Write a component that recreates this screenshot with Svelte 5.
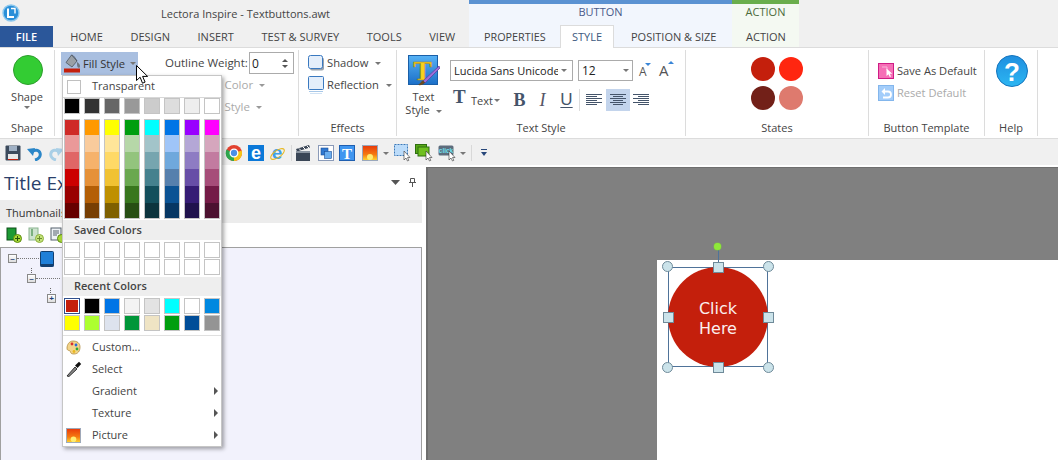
<script>
  const grays = ['#000000','#333333','#666666','#999999','#cccccc','#dddddd','#eeeeee','#ffffff'];
  const columns = [
    ['#cf2a27','#ea9999','#e06666','#cc0000','#990000','#660000'],
    ['#ff9900','#f9cb9c','#f6b26b','#e69138','#b45f06','#783f04'],
    ['#ffff00','#ffe599','#ffd966','#f1c232','#bf9000','#7f6000'],
    ['#009e0f','#b6d7a8','#93c47d','#6aa84f','#38761d','#274e13'],
    ['#00ffff','#a2c4c9','#76a5af','#45818e','#134f5c','#0c343d'],
    ['#0075e6','#9fc5f8','#6fa8dc','#5680ad','#0b5394','#073763'],
    ['#9900ff','#b4a7d6','#8e7cc3','#674ea7','#351c75','#20124d'],
    ['#ff00ff','#d5a6bd','#c27ba0','#a64d79','#741b47','#4c1130']
  ];
  const saved = Array(16).fill('#ffffff');
  const recent = ['#c41f0c','#000000','#0075e6','#f3f3f3','#e3e3e3','#00ffff','#ffffff','#0088e0',
    '#ffff00','#adff2f','#dde3ee','#009639','#efe4c4','#009e0f','#004d98','#949494'];
  const tabs = ['HOME','DESIGN','INSERT','TEST & SURVEY','TOOLS','VIEW'];
  const menuRows = [
    { label: 'Custom...', icon: 'palette' },
    { label: 'Select', icon: 'dropper' },
    { label: 'Gradient', sub: true },
    { label: 'Texture', sub: true },
    { label: 'Picture', sub: true, icon: 'picture' }
  ];
</script>

<div class="app">
  <header class="top">
    <div class="top-left">
      <div class="titlebar">
        <svg class="logo" width="18" height="18" viewBox="0 0 18 18">
          <circle cx="9" cy="9" r="8" fill="#2a8fd8" stroke="#8cc8ee" stroke-width="1.4"/>
          <path d="M6 4.500v8.500h6" fill="none" stroke="#fff" stroke-width="2"/>
          <path d="M9 4.500h4v5" fill="none" stroke="#fff" stroke-width="1.4"/>
        </svg>
        <span class="title">Lectora Inspire - Textbuttons.awt</span>
      </div>
      <nav class="tabs">
        <span class="file">FILE</span>
        <span class="tabs-gap"></span>
        {#each tabs as t}<span class="tab">{t}</span>{/each}
      </nav>
    </div>
    <div class="ctx ctx-blue">
      <div class="ctx-head">BUTTON</div>
      <div class="ctx-tabs">
        <span class="tab t-prop">PROPERTIES</span>
        <span class="tab active">STYLE</span>
        <span class="tab t-pos">POSITION &amp; SIZE</span>
      </div>
    </div>
    <div class="ctx ctx-green">
      <div class="ctx-head">ACTION</div>
      <div class="ctx-tabs"><span class="tab t-action">ACTION</span></div>
    </div>
  </header>

  <section class="ribbon">
    <div class="group g-shape">
      <div class="content shape-btn">
        <span class="green"></span>
        <span class="lbl">Shape</span>
        <i class="caret c-shape"></i>
      </div>
      <div class="glabel">Shape</div>
    </div>

    <div class="group g-style">
      <div class="content">
        <div class="style-top">
          <span class="fill-btn">
            <svg width="18" height="19" viewBox="0 0 18 19">
              <path d="M7.500 1 2 8.500l6 4.500 5-6z" fill="#9aa0a6" stroke="#4d5560" stroke-width=".8"/>
              <path d="M7.500 1c2 .5 3 2 5.500 6" fill="none" stroke="#4d5560"/>
              <path d="M13 8c1.500 1 3 2 3 4s-1 2-2 1.500-1-3-1-5.500z" fill="#6d7680"/>
              <rect x="0" y="14.500" width="16" height="4" fill="#c41f0c"/>
            </svg>
            <span class="fill-text">Fill Style</span>
            <i class="caret"></i>
          </span>
          <span class="ow-label">Outline Weight:</span>
          <span class="spin">
            <span>0</span>
            <span class="spin-arrows"><i class="tri-up"></i><i class="caret dark"></i></span>
          </span>
        </div>
        <div class="outline-row">Outline Color <i class="caret light"></i></div>
        <div class="outline-row">Outline Style <i class="caret light"></i></div>
      </div>
      <div class="glabel">Style</div>
    </div>

    <div class="group g-effects">
      <div class="content">
        <div class="effect">
          <svg width="17" height="16" viewBox="0 0 17 16">
            <rect x="2" y="2.500" width="14" height="13" rx="2" fill="#9aa3ad"/>
            <rect x=".5" y=".5" width="14" height="13" rx="2" fill="#e4eefa" stroke="#3a79c0"/>
          </svg>
          <span>Shadow</span><i class="caret"></i>
        </div>
        <div class="effect">
          <svg width="17" height="18" viewBox="0 0 17 18">
            <rect x=".5" y=".5" width="15" height="13" rx="1" fill="#e4eefa" stroke="#3a79c0"/>
            <path d="M1 15.500h14" stroke="#a8c8e8"/>
            <path d="M2 17.500h12" stroke="#d0e2f4"/>
          </svg>
          <span>Reflection</span><i class="caret"></i>
        </div>
      </div>
      <div class="glabel">Effects</div>
    </div>

    <div class="group g-text">
      <div class="content text-flex">
        <div class="ts-btn">
          <svg width="32" height="32" viewBox="0 0 32 32">
            <defs>
              <linearGradient id="tsg" x1="0" y1="0" x2="0" y2="1">
                <stop offset="0" stop-color="#56b2f5"/><stop offset="1" stop-color="#1b6fc8"/>
              </linearGradient>
            </defs>
            <rect x=".5" y=".5" width="29" height="29" fill="url(#tsg)" stroke="#1a5fa8"/>
            <text x="14.500" y="25" text-anchor="middle" class="ts-t">T</text>
            <path d="M31 11 15 26l2 2L32 13z" fill="#9a6fd8" stroke="#5c3a98" stroke-width=".7"/>
            <path d="M15 25.500c-2 .5-2.500 3-5 4.500 3 .5 6-.5 7-2.500z" fill="#6a4a22"/>
          </svg>
          <span class="lbl ts-l1">Text</span>
          <span class="lbl">Style <i class="caret"></i></span>
        </div>
        <div class="ts-right">
          <div class="ts-row1">
            <span class="combo c-font"><span class="clip">Lucida Sans Unicode</span><i class="caret"></i></span>
            <span class="combo c-size"><span class="clip">12</span><i class="caret"></i></span>
            <span class="growa a1">A<i class="tri-down-blue"></i></span>
            <span class="growa a2">A<i class="tri-up-blue"></i></span>
          </div>
          <div class="ts-row2">
            <span class="bigt">T</span>
            <span class="small-text">Text</span><i class="caret"></i>
            <span class="fmt f-b">B</span>
            <span class="fmt f-i">I</span>
            <span class="fmt f-u">U</span>
            <span class="vsep"></span>
            <span class="align a-l">
              <svg width="16" height="12" viewBox="0 0 16 12"><path d="M0 .5h16M0 2.500h11M0 4.500h16M0 6.500h11M0 8.500h16M0 10.500h11" stroke="#44546a"/></svg>
            </span>
            <span class="align on">
              <svg width="16" height="12" viewBox="0 0 16 12"><path d="M0 .5h16M3 2.500h10M0 4.500h16M3 6.500h10M0 8.500h16M3 10.500h10" stroke="#44546a"/></svg>
            </span>
            <span class="align a-r">
              <svg width="16" height="12" viewBox="0 0 16 12"><path d="M0 .5h16M5 2.500h11M0 4.500h16M5 6.500h11M0 8.500h16M5 10.500h11" stroke="#44546a"/></svg>
            </span>
          </div>
        </div>
      </div>
      <div class="glabel">Text Style</div>
    </div>

    <div class="group g-states">
      <div class="content states">
        <span class="dot" style="background:#c41f0c"></span>
        <span class="dot" style="background:#ff2610"></span>
        <span class="dot" style="background:#722018"></span>
        <span class="dot" style="background:#de7a6e"></span>
      </div>
      <div class="glabel">States</div>
    </div>

    <div class="group g-tpl">
      <div class="content tpl">
        <div class="tpl-row">
          <svg width="16" height="16" viewBox="0 0 16 16">
            <rect x=".5" y=".5" width="15" height="15" fill="#f56fb6" stroke="#cf1c85"/>
            <path d="M4 4h5v3" fill="none" stroke="#f9b6da"/>
            <path d="M8.500 5.500v7.500l2-1.800 1.300 2.800 1.200-.6-1.200-2.700h2.500z" fill="#fff"/>
          </svg>
          <span>Save As Default</span>
        </div>
        <div class="tpl-row off">
          <svg width="16" height="16" viewBox="0 0 16 16">
            <rect x=".5" y=".5" width="15" height="15" fill="#a3cdfa" stroke="#83b6ec"/>
            <path d="M5 6.500h5a2.800 2.800 0 0 1 0 6H5" fill="none" stroke="#fff" stroke-width="1.800"/>
            <path d="M7 3 3.500 6.500 7 10z" fill="#fff"/>
          </svg>
          <span>Reset Default</span>
        </div>
      </div>
      <div class="glabel">Button Template</div>
    </div>

    <div class="group g-help">
      <div class="content help">
        <svg width="32" height="32" viewBox="0 0 32 32">
          <defs>
            <linearGradient id="hg" x1="0" y1="0" x2="0" y2="1">
              <stop offset="0" stop-color="#1f8fe0"/><stop offset="1" stop-color="#2cb6f2"/>
            </linearGradient>
          </defs>
          <circle cx="16" cy="16" r="15.500" fill="url(#hg)" stroke="#1675bd"/>
          <text x="16" y="25.500" text-anchor="middle" class="help-q">?</text>
        </svg>
      </div>
      <div class="glabel">Help</div>
    </div>
  </section>

  <div class="qat">
    <svg class="q save" width="16" height="16" viewBox="0 0 16 16">
      <rect x=".5" y=".5" width="15" height="15" rx="1" fill="#3c4a5c"/>
      <rect x="4" y="1" width="8" height="5" fill="#9fb0c4"/>
      <rect x="3" y="9" width="10" height="6" fill="#e8e8e8"/>
      <rect x="3" y="14" width="10" height="1" fill="#c41f0c"/>
    </svg>
    <svg class="q undo" width="17" height="16" viewBox="0 0 17 16">
      <path d="M9 15c4-1 6-4 5-7-1-3-5-4-8-1" fill="none" stroke="#2a86c8" stroke-width="3"/>
      <path d="M1 4l8-1-2 8z" fill="#2a86c8"/>
    </svg>
    <svg class="q redo" width="17" height="16" viewBox="0 0 17 16">
      <path d="M8 15c-4-1-6-4-5-7 1-3 5-4 8-1" fill="none" stroke="#a9cfe6" stroke-width="3"/>
      <path d="M16 4l-8-1 2 8z" fill="#a9cfe6"/>
    </svg>
    <span class="q-hidden"></span>
    <svg class="q" width="18" height="18" viewBox="0 0 18 18">
      <circle cx="9" cy="9" r="8" fill="#e2412f"/>
      <path d="M9 9 16.600 6.500A8 8 0 0 1 9 17z" fill="#f5c518"/>
      <path d="M9 9 9 17A8 8 0 0 1 1.500 5.500z" fill="#2fa84f"/>
      <circle cx="9" cy="9" r="3.800" fill="#4a8fe8" stroke="#fff" stroke-width="1.300"/>
    </svg>
    <svg class="q vis" width="16" height="16" viewBox="0 0 16 16">
      <rect width="16" height="16" fill="#0b78d8"/>
      <text x="8" y="13.500" text-anchor="middle" class="e-w">e</text>
    </svg>
    <svg class="q vis" width="17" height="17" viewBox="0 0 17 17">
      <text x="8" y="14" text-anchor="middle" class="e-b">e</text>
      <ellipse cx="8.500" cy="9" rx="8" ry="3.500" transform="rotate(-35 8.500 9)" fill="none" stroke="#e8b820" stroke-width="1.100"/>
    </svg>
    <span class="qsep"></span>
    <svg class="q" width="15" height="16" viewBox="0 0 15 16">
      <rect y="6" width="14" height="10" fill="#3a4656"/>
      <path d="M0 4 13 0l1 2.500-13 4z" fill="#3a4656"/>
      <path d="M3 3.500 5 5.500M7 2l2 2M11 1l2 2" stroke="#fff"/>
      <rect y="6" width="14" height="2" fill="#8a94a0"/>
    </svg>
    <svg class="q m7" width="16" height="16" viewBox="0 0 16 16">
      <rect x=".5" y=".5" width="15" height="15" fill="#fff" stroke="#8a9ab8"/>
      <rect x="3" y="3" width="7" height="7" fill="#2f78d0" stroke="#1a4f98" stroke-width=".6"/>
      <rect x="6.500" y="6.500" width="7" height="7" fill="#6aaef0" stroke="#1a4f98" stroke-width=".6"/>
    </svg>
    <svg class="q" width="16" height="16" viewBox="0 0 16 16">
      <rect x=".5" y=".5" width="15" height="15" fill="#3f96f0" stroke="#1f5fb0"/>
      <text x="8" y="14" text-anchor="middle" class="t-w">T</text>
    </svg>
    <svg class="q m7" width="16" height="16" viewBox="0 0 16 16">
      <defs>
        <linearGradient id="pg" x1="0" y1="0" x2="0" y2="1">
          <stop offset="0" stop-color="#e8380a"/><stop offset=".6" stop-color="#f57a10"/><stop offset="1" stop-color="#ffd930"/>
        </linearGradient>
      </defs>
      <rect x=".5" y=".5" width="15" height="15" fill="url(#pg)" stroke="#9aa8bc"/>
      <circle cx="8" cy="12" r="3" fill="#ffec70"/>
    </svg>
    <i class="caret q-c"></i>
    <svg class="q" width="18" height="18" viewBox="0 0 18 18">
      <rect x=".5" y=".5" width="13" height="11" fill="#bcdcfa" stroke="#3a78b8" stroke-dasharray="2 1"/>
      <path d="M10 7v9l2-2 1.500 3 1.300-.6L13.500 13.500H16z" fill="#fff" stroke="#333" stroke-width=".6"/>
    </svg>
    <svg class="q m3" width="18" height="18" viewBox="0 0 18 18">
      <rect x=".5" y=".5" width="11" height="9" fill="#58a818" stroke="#2f6f10"/>
      <rect x="3" y="3" width="11" height="9" fill="#6fc020" stroke="#2f6f10"/>
      <path d="M11 7v9l2-2 1.500 3 1.300-.6L14.500 13.500H17z" fill="#fff" stroke="#333" stroke-width=".6"/>
    </svg>
    <svg class="q" width="18" height="18" viewBox="0 0 18 18">
      <rect x=".5" y="1.500" width="15" height="10" rx="1.500" fill="#5d6c7c"/>
      <text x="8" y="9" text-anchor="middle" class="click-t">click</text>
      <path d="M11 7v9l2-2 1.500 3 1.300-.6L14.500 13.500H17z" fill="#fff" stroke="#333" stroke-width=".6"/>
    </svg>
    <i class="caret q-c2"></i>
    <span class="qsep s2"></span>
    <svg class="q q-over" width="6" height="8" viewBox="0 0 6 8">
      <path d="M0 .5h6" stroke="#27477a"/><path d="M0 3h6L3 7z" fill="#27477a"/>
    </svg>
  </div>

  <main class="main">
    <aside class="panel">
      <div class="panel-title">
        <span class="title-ex">Title Explorer</span>
        <svg class="pt-arrow" width="9" height="5" viewBox="0 0 9 5"><path d="M0 0h9L4.500 5z" fill="#555"/></svg>
        <svg class="pt-pin" width="7" height="9" viewBox="0 0 7 9"><path d="M1.500.5h4v4h-4zM0 4.500h7M3.500 4.500V9" fill="none" stroke="#555"/></svg>
      </div>
      <div class="thumb-bar">Thumbnails</div>
      <div class="thumb-tools">
        <svg width="16" height="16" viewBox="0 0 16 16">
          <rect x="1" y="1" width="9" height="12" fill="#1d9a34" stroke="#0d4f18"/>
          <circle cx="11.500" cy="11.500" r="4" fill="#a8d838" stroke="#5a8a10"/>
          <path d="M9 11.500h5M11.500 9v5" stroke="#27520a"/>
        </svg>
        <svg width="16" height="16" viewBox="0 0 16 16">
          <rect x="1" y="1" width="9" height="12" fill="#cde3cf" stroke="#8ab490"/>
          <path d="M4 2v7" stroke="#7ab080" stroke-width="2"/>
          <circle cx="11.500" cy="11.500" r="4" fill="#c4e47a" stroke="#8eb040"/>
          <path d="M9 11.500h5M11.500 9v5" stroke="#6a8a30"/>
        </svg>
        <svg width="16" height="16" viewBox="0 0 16 16">
          <rect x="1" y="1" width="10" height="12" fill="#eef2f6" stroke="#55606c"/>
          <path d="M3 4h6M3 6h6M3 8h4" stroke="#55606c"/>
          <circle cx="11.500" cy="11.500" r="4" fill="#a8d838" stroke="#5a8a10"/>
        </svg>
      </div>
      <div class="tree">
        <div class="tree-row r1">
          <span class="pm">–</span><span class="dots d1"></span>
          <svg width="14" height="16" viewBox="0 0 14 16">
            <rect x=".5" y=".5" width="13" height="15" rx="1" fill="#1f7fd8" stroke="#123f70"/>
            <rect x=".5" y="13" width="13" height="2.500" fill="#123f70"/>
          </svg>
        </div>
        <div class="tree-row r2"><span class="pm">–</span><span class="dots d2"></span></div>
        <div class="tree-row r3"><span class="pm plus">+</span></div>
      </div>
    </aside>
    <div class="canvas">
      <div class="page">
        <div class="selection">
          <div class="circle-btn">Click<br />Here</div>
          <span class="rot-line"></span>
          <span class="rot"></span>
          <span class="h-c tl"></span><span class="h-c tr"></span>
          <span class="h-c bl"></span><span class="h-c br"></span>
          <span class="h-s tm"></span><span class="h-s bm"></span>
          <span class="h-s ml"></span><span class="h-s mr"></span>
        </div>
      </div>
    </div>
  </main>

  <div class="menu">
    <div class="m-trans"><span class="t-box"></span><span class="t-lbl">Transparent</span></div>
    <div class="sw-grid">
      {#each grays as c}<span class="sw" style="background:{c}"></span>{/each}
    </div>
    <div class="cols">
      {#each columns as col}
        <div class="col">
          {#each col as c}<span class="cell" style="background:{c}"></span>{/each}
        </div>
      {/each}
    </div>
    <div class="m-head">Saved Colors</div>
    <div class="sw-grid g2">
      {#each saved as c}<span class="sw" style="background:{c}"></span>{/each}
    </div>
    <div class="m-head h2">Recent Colors</div>
    <div class="sw-grid g2">
      {#each recent as c, i}<span class="sw" class:sel={i === 0} style="background:{c}"></span>{/each}
    </div>
    <div class="m-sep"></div>
    {#each menuRows as r}
      <div class="m-row">
        <span class="m-icon">
          {#if r.icon === 'palette'}
            <svg width="15" height="15" viewBox="0 0 15 15">
              <path d="M7 1c4 0 7 2 7 6s-2 7-6 7-3-2-4-3-3 0-3-3 2-7 6-7z" fill="#f3d48a" stroke="#a8802c" stroke-width=".7"/>
              <circle cx="6" cy="4" r="1.400" fill="#d8302c"/>
              <circle cx="10" cy="5" r="1.400" fill="#2c68d8"/>
              <circle cx="11" cy="9" r="1.400" fill="#2ca838"/>
              <circle cx="8" cy="11.500" r="1.400" fill="#e8b820"/>
            </svg>
          {:else if r.icon === 'dropper'}
            <svg width="16" height="16" viewBox="0 0 16 16">
              <path d="M1 15 9 6l2 2-8 7.500z" fill="#888" stroke="#111" stroke-width=".8"/>
              <path d="M9 4.500 13 .8l2.200 2.200-3.700 4z" fill="#111"/>
            </svg>
          {:else if r.icon === 'picture'}
            <svg width="15" height="15" viewBox="0 0 16 16">
              <rect x=".5" y=".5" width="15" height="15" fill="url(#pg)" stroke="#9aa8bc"/>
              <circle cx="8" cy="12" r="3" fill="#ffec70"/>
            </svg>
          {/if}
        </span>
        <span class="m-text">{r.label}</span>
        {#if r.sub}<i class="m-arrow"></i>{/if}
      </div>
    {/each}
  </div>

  <svg class="cursor" width="14" height="19" viewBox="0 0 14 19">
    <path d="M.5.5v15l3.600-3.300 2.400 6 2.600-1.100-2.500-5.700h5z" fill="#fff" stroke="#000"/>
  </svg>
</div>

<style>
  :global(body) { margin: 0; }
  .app {
    position: relative;
    width: 1058px;
    height: 460px;
    overflow: hidden;
    background: #f0f0f0;
    font-family: "Open Sans", "Liberation Sans", sans-serif;
    font-size: 11px;
    color: #444;
  }
  .top { display: flex; height: 47px; }
  .top-left { width: 469px; }
  .titlebar { height: 26px; display: flex; align-items: center; position: relative; }
  .logo { margin-left: 2px; }
  .title { margin-left: 141px; font-size: 11px; }
  .tabs { height: 21px; display: flex; align-items: center; }
  .file {
    width: 53px; height: 21px; background: #2b579a; color: #fff;
    display: flex; align-items: center; justify-content: center; font-weight: 600;
  }
  .tabs-gap { width: 3.500px; }
  .tab { padding: 0 13.800px; white-space: nowrap; line-height: 21px; }
  .ctx { border-top: 4px solid; height: 43px; box-sizing: content-box; }
  .ctx-blue { width: 263px; border-color: #5b92d2; background: #f2f6fd; }
  .ctx-green { width: 67px; border-color: #6aae4c; background: #f4f9f2; }
  .ctx-head { height: 22px; line-height: 16px; text-align: center; color: #4a5a8a; }
  .ctx-green .ctx-head { color: #4c6b3c; }
  .ctx-tabs { display: flex; height: 21px; }
  .t-prop { padding: 0 0 0 15px; width: 76px; box-sizing: border-box; font-size: 10.800px; }
  .active {
    width: 54px; margin-left: 15px; margin-top: -1px; height: 23px; padding: 0; text-align: center;
    background: #fff; border: 1px solid #dcdcdc; border-bottom: 0; box-sizing: border-box; color: #3d5a80;
    position: relative; z-index: 1;
  }
  .t-pos { padding: 0 0 0 17px; }
  .t-action { padding: 0 0 0 14px; }

  .ribbon {
    height: 92px; box-sizing: border-box; background: #fff;
    border-top: 1px solid #dcdcdc; border-bottom: 1px solid #dcdcdc;
    display: flex; padding-top: 2px;
  }
  .group {
    height: 86px; display: flex; flex-direction: column; box-sizing: border-box;
    border-right: 1px solid #dcdcdc; flex: none;
  }
  .content { height: 70px; position: relative; }
  .glabel { height: 16px; line-height: 16px; text-align: center; font-size: 11px; }
  .lbl { display: block; text-align: center; font-size: 11px; line-height: 13px; }
  .caret {
    display: inline-block; width: 0; height: 0; border: 3px solid transparent;
    border-top: 3.500px solid #777; border-bottom: 0; vertical-align: middle; margin-left: 3px;
  }
  .caret.light { border-top-color: #999; }
  .caret.dark { border-top-color: #555; margin: 0; }
  .tri-up { display: block; width: 0; height: 0; border: 3px solid transparent; border-bottom: 3.500px solid #555; border-top: 0; margin-bottom: 3px; }

  .g-shape { width: 55px; }
  .shape-btn { display: flex; flex-direction: column; align-items: center; }
  .green {
    width: 30px; height: 30px; border-radius: 50%; background: #33cc33; border: 1px solid #2d9e2d;
    box-sizing: border-box; margin-top: 5px; margin-bottom: 5px; margin-left: 2px;
  }
  .c-shape { margin: 3px 0 0 0; }

  .g-style { width: 244px; }
  .style-top { display: flex; align-items: flex-start; padding: 2px 0 0 6px; }
  .fill-btn {
    width: 77px; height: 23px; background: #a9bfe0; display: flex; align-items: center; box-sizing: border-box;
    padding-left: 3px; gap: 1px; font-size: 11.200px; color: #333; white-space: nowrap;
  }
  .fill-btn .caret { margin-left: 4px; }
  .ow-label { margin-left: 27px; margin-top: 3px; font-size: 11.500px; white-space: nowrap; width: 84px; }
  .spin {
    width: 45px; height: 22px; border: 1px solid #ababab; box-sizing: border-box; background: #fff;
    display: flex; align-items: center; justify-content: space-between; padding: 0 5px 0 2px; font-size: 12px; color: #222;
  }
  .spin-arrows { display: flex; flex-direction: column; align-items: center; }
  .outline-row { margin-left: 127px; margin-top: 4px; color: #aaa; height: 18px; line-height: 18px; font-size: 11.500px; white-space: nowrap; }
  .style-top + .outline-row { margin-top: 1px; }

  .g-effects { width: 98px; padding: 5px 0 0 9px; }
  .g-effects .content { height: 65px; }
  .g-effects .glabel { margin-left: -9px; }
  .effect { display: flex; align-items: center; height: 16px; margin-bottom: 6px; font-size: 11.200px; gap: 2px; }
  .effect span { margin-top: -2px; }
  .effect .caret { margin-left: 5px; }

  .g-text { width: 289px; }
  .text-flex { display: flex; }
  .ts-btn { width: 53px; padding-top: 5px; display: flex; flex-direction: column; align-items: center; }
  .ts-btn svg { margin-bottom: 3px; }
  .ts-t { font: bold 28px "Liberation Serif", serif; fill: #f7d11e; stroke: #a87d10; stroke-width: .5; }
  .ts-right { flex: 1; }
  .ts-row1 { display: flex; align-items: flex-start; margin-top: 10px; height: 22px; }
  .combo {
    display: flex; align-items: center; height: 21px; box-sizing: border-box; border: 1px solid #ababab;
    background: #fff; color: #222; font-size: 11px; padding: 0 5px 0 3px; justify-content: space-between;
  }
  .clip { overflow: hidden; white-space: nowrap; flex: 1; }
  .c-font { width: 123px; }
  .c-size { width: 55px; margin-left: 5px; padding-right: 3px; font-size: 12px; }
  .growa { position: relative; color: #555; line-height: 18px; }
  .a1 { margin-left: 6px; width: 20px; font-size: 12px; margin-top: 3px; }
  .a2 { font-size: 15px; margin-top: 1px; }
  .tri-down-blue, .tri-up-blue { position: absolute; top: 0; width: 0; height: 0; border: 3px solid transparent; }
  .a2 .tri-up-blue { right: -5px; top: 0; }
  .a1 .tri-down-blue { right: 8px; top: 0; }
  .tri-down-blue { border-top: 3px solid #3a86d8; border-bottom: 0; }
  .tri-up-blue { border-bottom: 3px solid #3a86d8; border-top: 0; }
  .ts-row2 { display: flex; align-items: center; height: 22px; margin-top: 7px; padding-left: 3px; }
  .bigt { font: bold 19px "Liberation Serif", serif; color: #44546a; width: 17px; line-height: 18px; margin-top: -6px; }
  .small-text { margin-left: 1px; width: 20px; font-size: 11px; }
  .fmt { font: 18px "Liberation Serif", serif; color: #44546a; width: 23px; text-align: center; }
  .f-b { font-weight: bold; margin-left: 8px; }
  .f-i { font-style: italic; color: #556; }
  .f-u { text-decoration: underline; text-underline-offset: 2px; font-family: "Liberation Sans", sans-serif; font-size: 17px; margin-left: 1px; }
  .vsep { width: 1px; height: 22px; background: #dcdcdc; margin: 0 0 0 1px; }
  .align { width: 16px; height: 22px; display: flex; align-items: center; justify-content: center; }
  .align.on { background: #c3d4ec; width: 24px; margin-left: 4px; }
  .a-l { margin-left: 6px; }
  .a-r { margin-left: 3px; }

  .g-states { width: 183px; }
  .states { display: grid; grid-template-columns: 24px 24px; grid-auto-rows: 24px; align-content: start; gap: 5px 4px; padding: 7px 0 0 65px; box-sizing: border-box; }
  .dot { width: 24px; height: 24px; border-radius: 50%; }

  .g-tpl { width: 116px; }
  .tpl { padding: 13px 0 0 9px; box-sizing: border-box; }
  .tpl-row { display: flex; align-items: center; height: 16px; gap: 3px; margin-bottom: 6px; font-size: 11.100px; white-space: nowrap; }
  .tpl-row span { margin-top: -2px; }
  .off { color: #aaa; }

  .g-help { width: 53px; }
  .help { padding: 5px 0 0 11px; box-sizing: border-box; }
  .help-q { font: bold 26px "Liberation Sans", sans-serif; fill: #fff; }

  .qat { height: 26px; display: flex; align-items: center; padding: 2px 0 0 5px; box-sizing: border-box; }
  .q { flex: none; display: block; }
  .vis { overflow: visible; }
  .qat .q + .q { margin-left: 5px; }
  .qat .undo { margin-left: 6px; }
  .qat .redo { margin-left: 4px; }
  .qat .q.m7 { margin-left: 7px; }
  .qat .q.m3 { margin-left: 3px; }
  .q-hidden { width: 160px; flex: none; }
  .qsep { width: 1px; height: 16px; background: #d8d8d8; margin: 0 4px 0 5px; flex: none; }
  .q-c { margin: 0 5px 0 5px; flex: none; }
  .q-c2 { margin: 0 0 0 4px; flex: none; }
  .qsep.s2 { margin: 0 9px 0 5px; }
  .e-w { font: bold 18px "Liberation Sans", sans-serif; fill: #fff; }
  .e-b { font: bold 19px "Liberation Sans", sans-serif; fill: #3fa0e8; }
  .t-w { font: bold 15px "Liberation Serif", serif; fill: #fff; }
  .click-t { font: bold 6.500px "Liberation Sans", sans-serif; fill: #6fe0f0; }

  .main { display: flex; height: 295px; background: #fff; }
  .panel { width: 426px; flex: none; display: flex; flex-direction: column; background: #fff; }
  .panel-title { height: 35px; display: flex; align-items: center; padding-left: 4px; position: relative; color: #2a3f6a; }
  .title-ex { font-size: 19px; white-space: nowrap; flex: 1; }
  .pt-arrow { margin-right: 9px; }
  .pt-pin { margin-right: 10px; }
  .thumb-bar { width: 422px; height: 23px; background: #ececec; line-height: 25px; padding-left: 6px; box-sizing: border-box; font-size: 11px; color: #333; }
  .thumb-tools { height: 24px; display: flex; align-items: center; gap: 6px; padding-left: 6px; }
  .tree {
    width: 422px; flex: 1; box-sizing: border-box; background: #f2f2fc;
    border: 1px solid #a0a0a0; border-bottom: 0;
  }
  .tree-row { display: flex; align-items: center; position: relative; }
  .r1 { height: 21px; padding-left: 7px; }
  .r2 { height: 19px; padding-left: 26px; }
  .r3 { height: 21px; padding-left: 46px; }
  .r2::before { content: ""; position: absolute; left: 30px; top: -1px; height: 5px; border-left: 1px dotted #666; }
  .r3::before { content: ""; position: absolute; left: 49px; top: 0; height: 5px; border-left: 1px dotted #666; }
  .pm {
    width: 9px; height: 9px; box-sizing: border-box; border: 1px solid #888; background: linear-gradient(#fff, #ddd);
    font: bold 8px/7px "Liberation Sans", sans-serif; text-align: center; color: #1f3d78; flex: none;
  }
  .dots { border-top: 1px dotted #777; height: 0; flex: none; }
  .d1 { width: 22px; margin-right: 1px; }
  .d2 { width: 24px; }

  .canvas {
    flex: 1; margin-top: 2px; background: #808080; position: relative;
    border-left: 2px solid #6e6e6e; border-top: 1px solid #6e6e6e;
  }
  .page { position: absolute; left: 229px; top: 92px; right: 0; bottom: 0; background: #fff; }
  .selection { position: absolute; left: 11px; top: 7px; width: 100px; height: 100px; box-sizing: border-box; border: 1px solid #4f7399; }
  .circle-btn {
    position: absolute; inset: -1px; border-radius: 50%; background: #c41f0c; color: #fbeeee;
    text-align: center; font: 16px/20px "DejaVu Sans", sans-serif;
    padding-top: 32px; box-sizing: border-box;
  }
  .rot-line { position: absolute; left: 49px; top: -21px; width: 1px; height: 20px; background: #4f7399; }
  .rot { position: absolute; left: 45px; top: -25px; width: 7px; height: 7px; border-radius: 50%; background: #8fe83a; box-shadow: 0 0 0 .5px #7ab84a; }
  .h-c, .h-s { position: absolute; width: 11px; height: 11px; box-sizing: border-box; background: #cbe3ea; border: 1px solid #6f8a99; }
  .h-c { border-radius: 50%; }
  .tl { left: -7px; top: -7px; } .tr { right: -7px; top: -7px; }
  .bl { left: -7px; bottom: -7px; } .br { right: -7px; bottom: -7px; }
  .tm { left: 44px; top: -6px; } .bm { left: 44px; bottom: -7px; }
  .ml { left: -6px; top: 44px; } .mr { right: -7px; top: 44px; }

  .menu {
    position: absolute; left: 62px; top: 75px; width: 160px; box-sizing: border-box; background: #fff;
    border: 1px solid #c6c6c6; box-shadow: 2px 2px 4px rgba(0,0,0,.35); font-size: 11px;
  }
  .m-trans { height: 21px; display: flex; align-items: center; border-bottom: 1px solid #d8d8d8; padding-left: 4px; }
  .t-box { width: 14px; height: 14px; box-sizing: border-box; border: 1px solid #c0c0c0; margin-right: 11px; background: #fff; }
  .t-lbl { margin-top: -2px; }
  .sw-grid { display: grid; grid-template-columns: repeat(8, 16px); column-gap: 4px; row-gap: 1px; padding-left: 1px; }
  .g2 { margin-top: 2px; }
  .sw { height: 16px; box-sizing: border-box; border: 1px solid #c4c4c4; }
  .sw.sel { border-color: #2f4f8c; outline: 1px solid #fff; outline-offset: -2px; }
  .cols { display: grid; grid-template-columns: repeat(8, 16px); column-gap: 4px; padding-left: 1px; margin-top: 5px; }
  .col { display: flex; flex-direction: column; height: 100px; box-sizing: border-box; border: 1px solid #c4c4c4; }
  .cell { flex: none; height: 17px; }
  .cell:first-child, .cell:last-child { height: 15px; }
  .m-head { height: 20px; line-height: 20px; background: #eee; margin-top: 1px; padding-left: 11px; font-weight: 600; color: #444; font-size: 11px; }
  .h2 { height: 19px; line-height: 18px; margin-top: 2px; }
  .m-sep { height: 1px; background: #e0e0e0; margin-top: 4px; }
  .m-row { height: 22px; display: flex; align-items: center; position: relative; }
  .m-icon { width: 29px; display: flex; justify-content: flex-start; padding-left: 3px; box-sizing: border-box; flex: none; }
  .m-text { margin-top: -2px; }
  .m-arrow { position: absolute; right: 3px; top: 7px; width: 0; height: 0; border: 4px solid transparent; border-left: 4px solid #555; border-right: 0; }
  .cursor { position: absolute; left: 136px; top: 65px; }
</style>
